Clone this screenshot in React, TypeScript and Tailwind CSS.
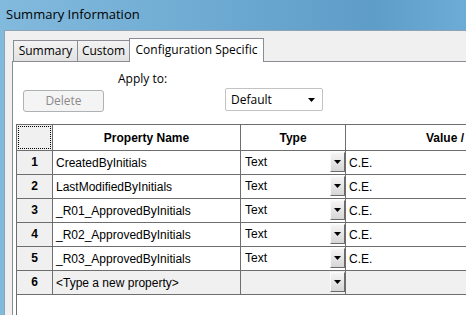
const rows = [
  { n: 1, name: 'CreatedByInitials', type: 'Text', value: 'C.E.' },
  { n: 2, name: 'LastModifiedByInitials', type: 'Text', value: 'C.E.' },
  { n: 3, name: '_R01_ApprovedByInitials', type: 'Text', value: 'C.E.' },
  { n: 4, name: '_R02_ApprovedByInitials', type: 'Text', value: 'C.E.' },
  { n: 5, name: '_R03_ApprovedByInitials', type: 'Text', value: 'C.E.' },
]

function DownArrow() {
  return (
    <svg width="7" height="4" viewBox="0 0 7 4">
      <path d="M0 0h7L3.5 4z" fill="#000" />
    </svg>
  )
}

function DropButton() {
  return (
    <div className="flex h-[20px] w-[15px] items-center justify-center border border-t-[#fafafa] border-l-[#fafafa] border-r-[#6b6b6b] border-b-[#6b6b6b] bg-gradient-to-b from-[#f5f5f5] to-[#d6d6d6]">
      <DownArrow />
    </div>
  )
}

const cell = 'border-r border-b border-[#6e6e6e] h-[24px]'

export default function App() {
  return (
    <div className="flex h-[315px] w-[466px] flex-col overflow-hidden bg-[linear-gradient(90deg,#82badd_0%,#6eaad2_45%,#5e9dc8_80%,#6eacd8_100%)] font-['Open_Sans',sans-serif] text-[12px] text-black">
      {/* title bar */}
      <div className="flex h-[30px] shrink-0 items-center pl-[6px] text-[13px]">
        Summary Information
      </div>

      {/* window body */}
      <div className="ml-[4px] flex flex-1 flex-col border-l border-t border-[#8fa3b6] bg-[#f0f0f0] pl-[7px] pt-[7px]">
        {/* tabs */}
        <div className="flex h-[23px] items-end">
          <div className="ml-px flex h-[21px] w-[65px] items-center justify-center border border-b-0 border-[#898c95] bg-gradient-to-b from-[#f3f3f3] to-[#e2e2e2] pb-px">
            Summary
          </div>
          <div className="flex h-[21px] w-[51px] items-center justify-center border-t border-[#898c95] bg-gradient-to-b from-[#f3f3f3] to-[#e2e2e2] pb-px">
            Custom
          </div>
          <div className="relative z-10 -mb-px flex h-[24px] w-[135px] items-start justify-center border border-b-0 border-[#898c95] bg-white pt-[2px]">
            Configuration Specific
          </div>
        </div>

        {/* tab panel */}
        <div className="flex flex-1 flex-col border-l border-t border-[#898c95] bg-white">
          <div className="ml-[105px] mt-[9px] h-[16px] leading-[16px]">Apply to:</div>
          <div className="flex items-start">
            <button className="ml-[10px] mt-[3px] h-[22px] w-[81px] rounded-[3px] border border-[#adb2b5] bg-[#f4f4f4] text-[#8a8a8a]">
              Delete
            </button>
            <div className="ml-[121px] mt-[1px] flex h-[23px] w-[98px] items-center justify-between rounded-[2px] border border-[#c3c3c3] bg-white pl-[5px] pr-[7px]">
              <span>Default</span>
              <DownArrow />
            </div>
          </div>

          {/* property grid */}
          <div className="ml-[3px] mt-[12px] flex-1 border-l border-t border-[#6e6e6e] bg-white font-['Liberation_Sans',Arial,sans-serif]">
            <div className="grid grid-cols-[36px_188px_105px_198px]">
              <div className="h-[26px] border-r border-b border-[#6e6e6e] bg-[#f0f0f0] p-px">
                <div className="h-full w-full border border-dotted border-black" />
              </div>
              <div className="flex h-[26px] items-center justify-center border-r border-b border-[#6e6e6e] font-bold">
                Property Name
              </div>
              <div className="flex h-[26px] items-center justify-center border-r border-b border-[#6e6e6e] font-bold">
                Type
              </div>
              <div className="flex h-[26px] items-center justify-center whitespace-nowrap border-b border-[#6e6e6e] font-bold">
                Value /
              </div>

              {rows.map(r => (
                <div key={r.n} className="contents">
                  <div className={`${cell} flex justify-center bg-[#f0f0f0] pt-[2px] font-bold`}>{r.n}</div>
                  <div className={`${cell} flex items-center pl-[3px]`}>{r.name}</div>
                  <div className={`${cell} flex items-center justify-between pl-[4px] pb-px`}>
                    <span>{r.type}</span>
                    <DropButton />
                  </div>
                  <div className="flex h-[24px] items-center border-b border-[#6e6e6e] pl-[3px]">{r.value}</div>
                </div>
              ))}

              <div className={`${cell} flex justify-center bg-[#f0f0f0] pt-[2px] font-bold`}>6</div>
              <div className={`${cell} flex items-center bg-[#f0f0f0] pl-[3px]`}>&lt;Type a new property&gt;</div>
              <div className={`${cell} flex items-center justify-end bg-[#f0f0f0] pb-px`}>
                <DropButton />
              </div>
              <div className="h-[24px] border-b border-[#6e6e6e] bg-[#f0f0f0]" />
            </div>
          </div>
        </div>
      </div>
    </div>
  )
}
